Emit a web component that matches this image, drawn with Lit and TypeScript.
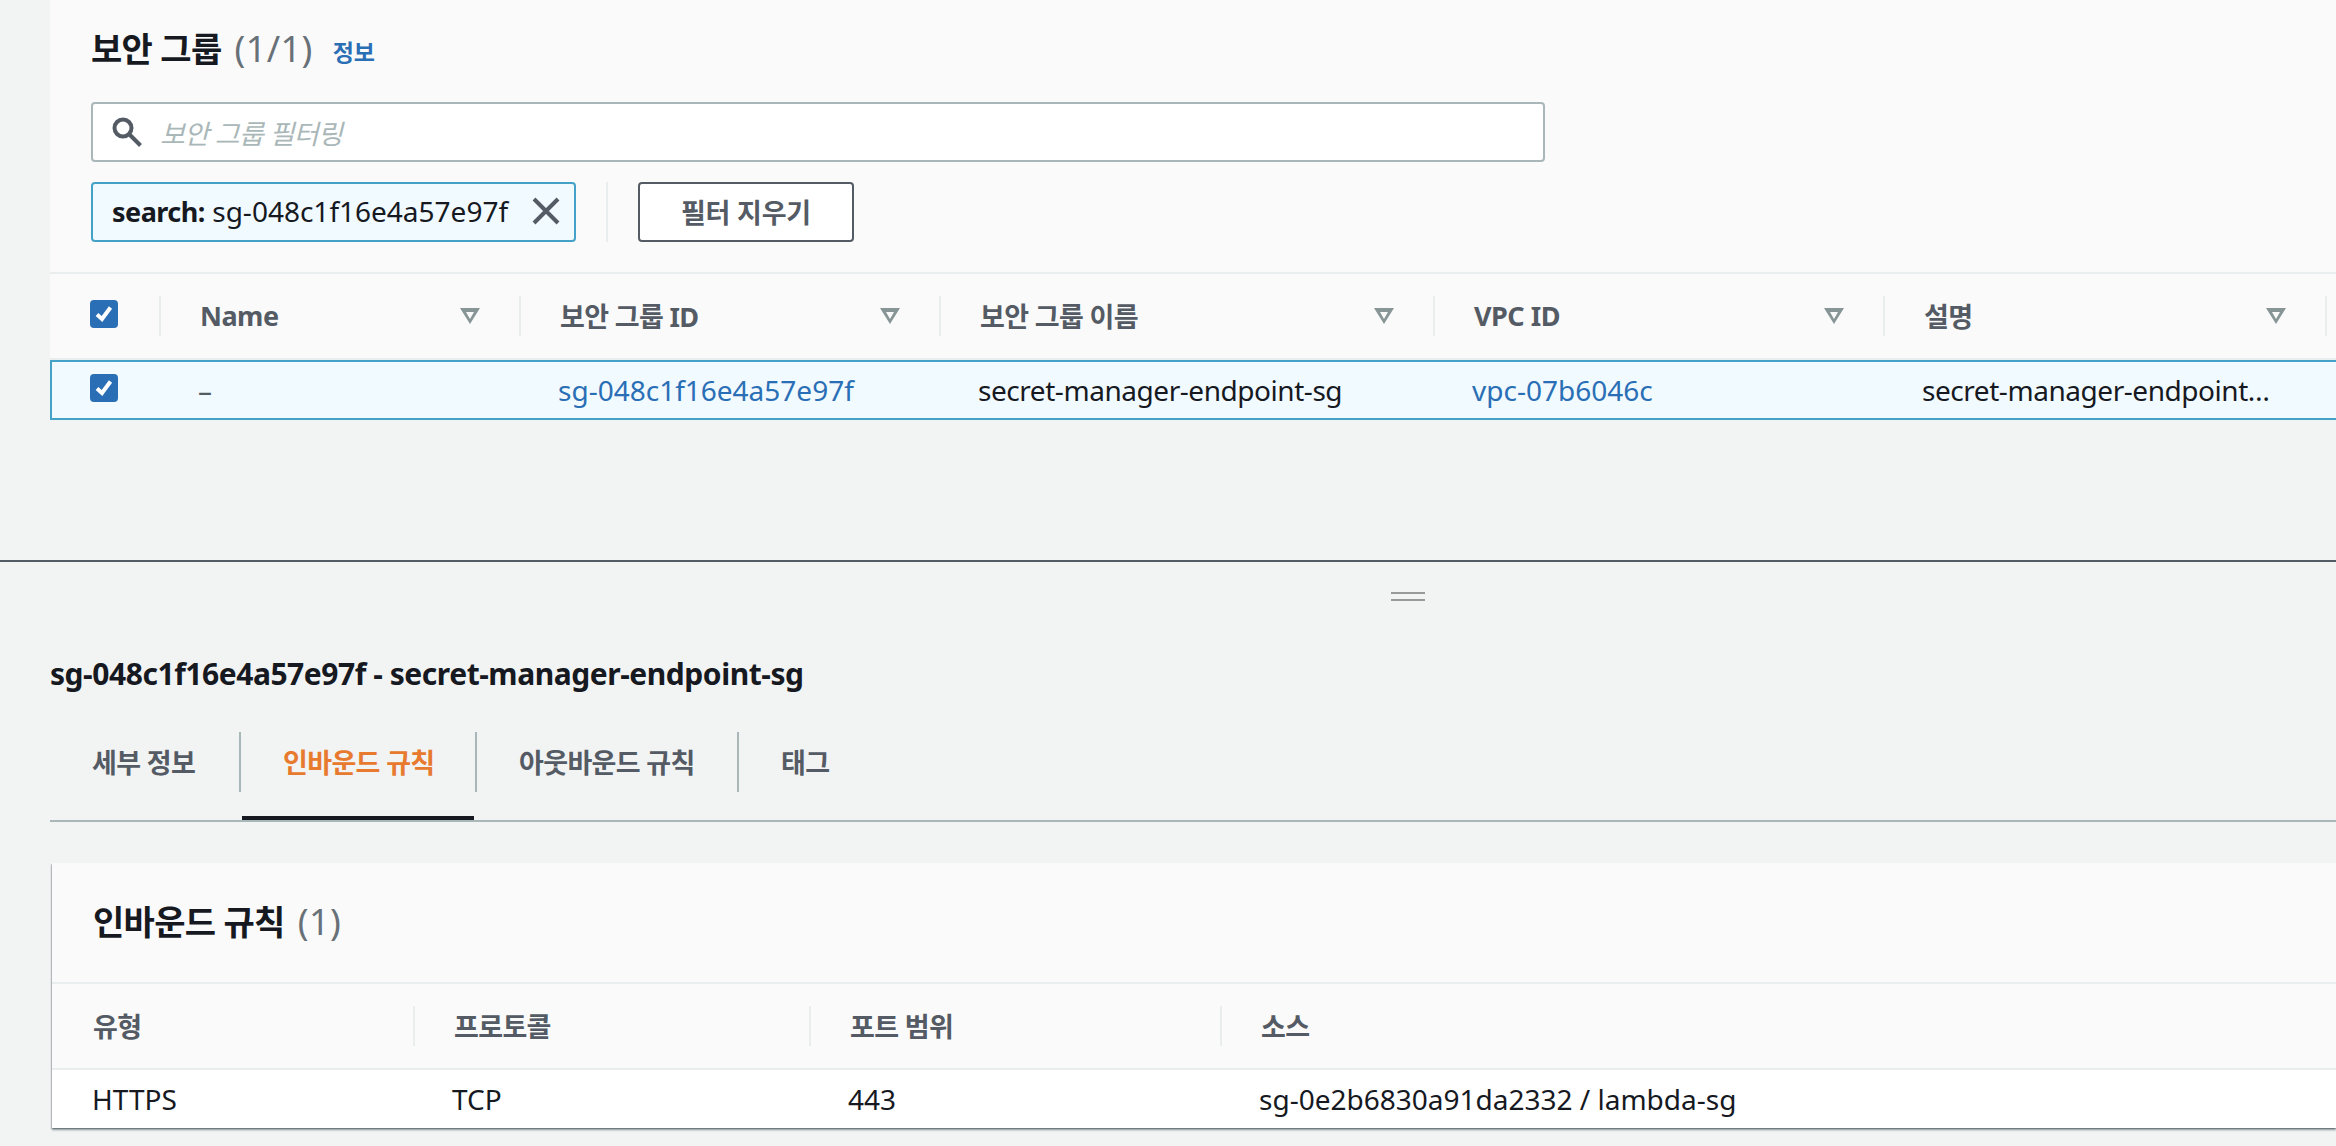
import { LitElement, html, css } from "lit";
import { customElement } from "lit/decorators.js";

const sortIcon = html`<svg class="sort" viewBox="0 0 20 16" width="20" height="16"><path fill-rule="evenodd" d="M0 0H20L10 16ZM6 4L10 11L14 4Z" fill="#879596"/></svg>`;
const check = html`<span class="check"><svg viewBox="0 0 28 28" width="28" height="28"><path d="M7 14.5L12 19L20.5 7.5" fill="none" stroke="#fff" stroke-width="4"/></svg></span>`;

@customElement("app-root")
export class AppRoot extends LitElement {
  static styles = css`
    :host { display: block; width: 2336px; height: 1146px; overflow: hidden; background: #f2f3f3; color: #16191f;
      font-family: "Noto Sans", "Noto Sans CJK KR", sans-serif; font-size: 28px; }
    * { box-sizing: border-box; }
    .ko { font-size: 27px; letter-spacing: -0.65px; }
    .card { margin-left: 50px; background: #fafafa; }
    .titlebar { height: 98px; margin-bottom: 4px; padding-left: 41px; display: flex; align-items: center; }
    h2 { margin: 0; font-size: 34px; letter-spacing: -0.7px; font-weight: 700; line-height: 48px; white-space: nowrap; }
    h2 span { margin-left: 5px; font-size: 36px; letter-spacing: 0.4px; font-weight: 400; color: #687078; }
    .info { font-size: 23px; letter-spacing: -0.3px; font-weight: 700; color: #2a6fb5; margin: 3px 0 0 20px; }
    .search { margin-left: 41px; width: 1454px; height: 60px; background: #fff; border: 2px solid #aab7b8; border-radius: 4px;
      display: flex; align-items: center; padding-left: 19px; gap: 18px; }
    .search em { color: #aab7b8; font-style: italic; }
    .filters { margin: 20px 0 0 41px; height: 60px; display: flex; align-items: stretch; }
    .token { width: 485px; border: 2px solid #44a2c9; border-radius: 4px; background: #f1faff; display: flex; align-items: center;
      padding: 0 14px 2px 19px; justify-content: space-between; white-space: nowrap; }
    .token b { font-weight: 700; font-size: 27px; letter-spacing: -0.5px; }
    .vsep { width: 2px; background: #eaeded; margin: 0 30px; }
    .btn { width: 216px; border: 2px solid #545b64; border-radius: 4px; background: #fff; color: #545b64; font-weight: 700;
      display: flex; align-items: center; justify-content: center; padding-bottom: 2px; }
    .btn .ko { letter-spacing: -0.2px; }
    .grid { display: grid; grid-template-columns: 111px 360px 420px 494px 450px 442px; }
    .head-top { margin-top: 30px; border-top: 2px solid #eaeded; border-bottom: 2px solid #eaeded; height: 88px; }
    .th { position: relative; display: flex; align-items: center; justify-content: space-between; padding: 0 41px 0 39px;
      font-weight: 700; color: #545b64; white-space: nowrap; }
    .th .ko, .th .en { padding-bottom: 2px; }
    .th .en { font-size: 27px; letter-spacing: -0.5px; }
    .th.sep::after { content: ""; position: absolute; right: 0; top: 22px; bottom: 22px; width: 2px; background: #eaeded; }
    .th.first { padding: 0 0 0 40px; }
    .row-top { height: 60px; background: #f1faff; border: 2px solid #44a2c9; border-right: 0; grid-template-columns: 109px 360px 420px 494px 450px 442px; }
    .td { display: flex; align-items: center; padding: 0 0 0 37px; white-space: nowrap; }
    .td.first { padding-left: 38px; }
    .narrow { letter-spacing: -0.45px; }
    a { color: #2a6fb5; text-decoration: none; }
    .dash { color: #545b64; }
    .check { display: block; width: 28px; height: 28px; margin-bottom: 4px; border-radius: 4px; background: #2a6fb5; }
    .check svg { display: block; }
    .splitter { margin-top: 140px; height: 2px; background: #545b64; }
    .handle { margin: 30px 0 0 1391px; width: 34px; height: 9px; border-top: 2px solid #999; border-bottom: 2px solid #999; }
    .sub { margin: 44px 0 0 50px; height: 60px; padding-bottom: 4px; display: flex; align-items: center; font-weight: 700; font-size: 30px; letter-spacing: -0.45px; white-space: nowrap; }
    .tabs { margin: 27px 0 0 50px; display: flex; border-bottom: 2px solid #aab7b8; }
    .tab { position: relative; height: 88px; padding: 0 0 30px 42px; display: flex; align-items: center; font-weight: 700; color: #545b64; white-space: nowrap; }
    .tab.sep::after { content: ""; position: absolute; right: 0; top: 0; height: 60px; width: 2px; background: #aab7b8; }
    .tab.active { color: #e77a2e; }
    .tab.active::before { content: ""; position: absolute; left: 1px; right: 3px; bottom: 0; height: 4px; background: #16191f; }
    .card2 { margin: 41px 0 0 52px; background: #fafafa;
      box-shadow: 0 2px 2px 0 rgba(0,28,36,.4), 1px 1px 1px 0 rgba(0,28,36,.15), -1px 1px 1px 0 rgba(0,28,36,.15); }
    .card2 .t { height: 119px; padding: 0 0 2px 41px; display: flex; align-items: center; }
    .grid2 { display: grid; grid-template-columns: 363px 396px 411px 1fr; }
    .head2 { height: 88px; border-top: 2px solid #eaeded; border-bottom: 2px solid #eaeded; }
    .row2 { height: 58px; background: #fff; }
    .head2 .th { justify-content: flex-start; }
    .head2 .th.f { padding-left: 41px; }
    .row2 .td.f { padding-left: 40px; }
  `;

  render() {
    return html`
      <section class="card">
        <div class="titlebar"><h2>보안 그룹 <span>(1/1)</span></h2><a class="info" href="#">정보</a></div>
        <div class="search">
          <svg width="30" height="30" viewBox="0 0 30 30"><circle cx="11" cy="11" r="8.5" fill="none" stroke="#545b64" stroke-width="4"/><path d="M17 17L28.5 28.5" stroke="#545b64" stroke-width="4" fill="none"/></svg>
          <em class="ko">보안 그룹 필터링</em>
        </div>
        <div class="filters">
          <div class="token"><span><b>search:</b> sg-048c1f16e4a57e97f</span>
            <svg width="28" height="28" viewBox="0 0 28 28"><path d="M2 2L26 26M26 2L2 26" stroke="#545b64" stroke-width="4" fill="none"/></svg></div>
          <div class="vsep"></div>
          <div class="btn"><span class="ko">필터 지우기</span></div>
        </div>
        <div class="grid head-top">
          <div class="th sep first">${check}</div>
          <div class="th sep"><span class="en">Name</span>${sortIcon}</div>
          <div class="th sep"><span class="ko">보안 그룹 ID</span>${sortIcon}</div>
          <div class="th sep"><span class="ko">보안 그룹 이름</span>${sortIcon}</div>
          <div class="th sep"><span class="en">VPC ID</span>${sortIcon}</div>
          <div class="th sep"><span class="ko">설명</span>${sortIcon}</div>
        </div>
        <div class="grid row-top">
          <div class="td first">${check}</div>
          <div class="td dash">–</div>
          <div class="td"><a href="#">sg-048c1f16e4a57e97f</a></div>
          <div class="td narrow">secret-manager-endpoint-sg</div>
          <div class="td"><a href="#">vpc-07b6046c</a></div>
          <div class="td narrow">secret-manager-endpoint…</div>
        </div>
      </section>
      <div class="splitter"></div>
      <div class="handle"></div>
      <div class="sub">sg-048c1f16e4a57e97f - secret-manager-endpoint-sg</div>
      <div class="tabs">
        <div class="tab sep" style="width:191px"><span class="ko">세부 정보</span></div>
        <div class="tab sep active" style="width:236px"><span class="ko">인바운드 규칙</span></div>
        <div class="tab sep" style="width:262px"><span class="ko">아웃바운드 규칙</span></div>
        <div class="tab"><span class="ko">태그</span></div>
      </div>
      <section class="card2">
        <div class="t"><h2>인바운드 규칙 <span>(1)</span></h2></div>
        <div class="grid2 head2">
          <div class="th sep f"><span class="ko">유형</span></div>
          <div class="th sep"><span class="ko">프로토콜</span></div>
          <div class="th sep"><span class="ko">포트 범위</span></div>
          <div class="th"><span class="ko">소스</span></div>
        </div>
        <div class="grid2 row2">
          <div class="td f">HTTPS</div>
          <div class="td">TCP</div>
          <div class="td">443</div>
          <div class="td">sg-0e2b6830a91da2332 / lambda-sg</div>
        </div>
      </section>
    `;
  }
}
